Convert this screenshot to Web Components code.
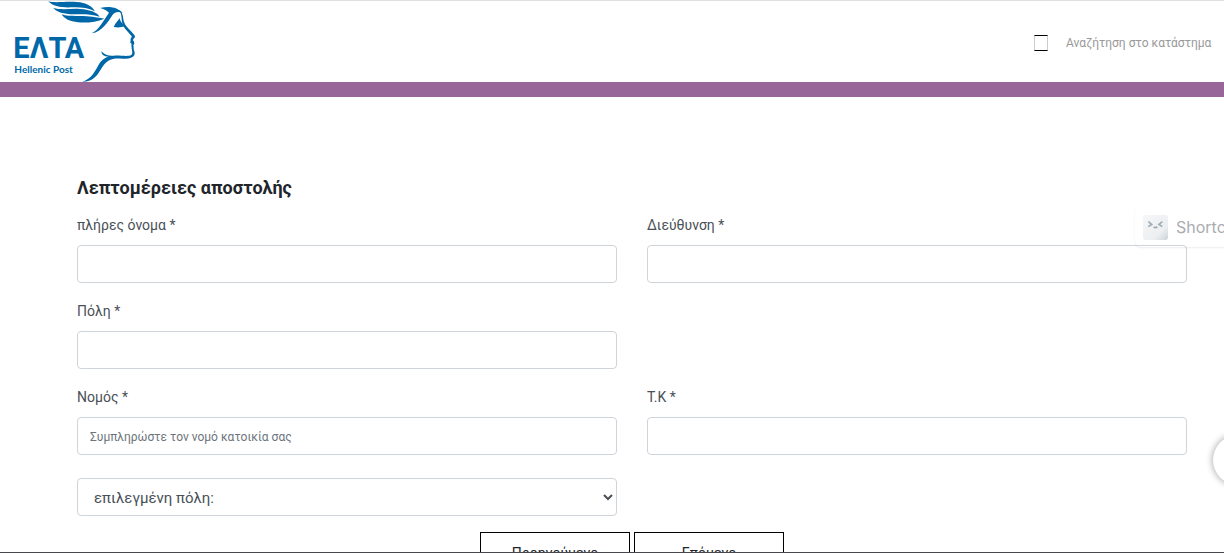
<!DOCTYPE html>
<html lang="el">
<head>
<meta charset="utf-8">
<title>ΕΛΤΑ</title>
<style>
    body {
        margin: 0;
        background: #fff;
        color: #212529;
        font-family: Roboto, "Noto Sans", sans-serif;
    }
</style>
</head>
<body>
<checkout-page></checkout-page>

<script>
class EltaLogo extends HTMLElement {
    constructor() {
        super();
        this.attachShadow({mode: "open"}).innerHTML = `
        <style>
            :host { display: block; }
            svg { display: block; width: 140px; height: 81px; }
            text { font-family: Roboto, sans-serif; font-weight: 700; }
            .small { font-family: Lato, sans-serif; }
        </style>
        <svg viewBox="0 3 420 243" fill="#0068a8" role="img" aria-label="ΕΛΤΑ Hellenic Post">
            <path d="M145 4C167 10 199 3 230 6C258 8 277 18 285 34C262 23 241 21 215 22C186 23 158 20 145 4Z"/>
            <path d="M160 24C184 31 213 25 240 27C272 29 292 38 299 50C270 41 246 43 221 43C191 42 170 37 160 24Z"/>
            <path d="M185 43C207 51 238 46 261 49C284 51 300 54 313 56C290 65 261 70 234 67C209 64 193 57 185 43Z"/>
            <path d="M300 24C330 17 354 23 368 39C354 34 346 35 338 44C324 65 307 95 275 100C297 89 307 67 327 38C319 30 311 27 300 24Z"/>
            <path d="M341 81C347 67 354 64 358 54C360 62 366 69 373 79C364 83 352 83 341 81Z"/>
            <path d="M356 29C365 34 369 43 370 57C372 73 382 82 393 94L403 105C407 110 405 113 400 117L399 121C404 126 404 132 400 136C402 141 400 145 402 151C405 158 406 165 399 170C386 179 363 175 342 176C318 180 308 199 297 217C285 236 270 246 247 245C270 238 282 219 291 203C301 184 309 174 326 170C312 170 305 165 304 154C314 165 326 168 341 167C360 165 383 171 394 165C399 160 396 155 396 149C394 145 396 141 394 137L395 132L391 128L392 118C390 114 397 113 395 109L384 96C373 85 366 75 365 59C365 47 363 37 356 29Z"/>
            <text x="40" y="174" font-size="87">ΕΛΤΑ</text>
            <text class="small" x="43" y="218" font-size="30">Hellenic Post</text>
        </svg>`;
    }
}
customElements.define("elta-logo", EltaLogo);

class StoreSearch extends HTMLElement {
    constructor() {
        super();
        this.attachShadow({mode: "open"}).innerHTML = `
        <style>
            :host { display: flex; align-items: center; gap: 18px; padding-top: 2px; }
            button {
                width: 14px;
                height: 16px;
                padding: 0;
                border: solid;
                border-width: 1px;
                border-color: #000 #ccc;
                background: #fff;
            }
            input {
                width: 152px;
                height: 24px;
                padding: 0;
                border: 0;
                outline: 0;
                appearance: none;
                font: 12px Roboto, "Noto Sans", sans-serif;
            }
            input::placeholder { color: #999; opacity: 1; }
        </style>
        <button type="button" aria-label="Αναζήτηση"></button>
        <input type="text" aria-label="Αναζήτηση στο κατάστημα" placeholder="Αναζήτηση στο κατάστημα">`;
    }
}
customElements.define("store-search", StoreSearch);

class SiteHeader extends HTMLElement {
    constructor() {
        super();
        this.attachShadow({mode: "open"}).innerHTML = `
        <style>
            :host { display: block; }
            header {
                display: flex;
                align-items: center;
                justify-content: space-between;
                padding-right: 6px;
                border-top: 1px solid #dfdfdf;
                border-bottom: 15px solid #996699;
            }
        </style>
        <header>
            <elta-logo></elta-logo>
            <store-search></store-search>
        </header>`;
    }
}
customElements.define("site-header", SiteHeader);

class FormField extends HTMLElement {
    connectedCallback() {
        const label = this.getAttribute("label");
        const placeholder = this.getAttribute("placeholder") || "";
        this.attachShadow({mode: "open"}).innerHTML = `
        <style>
            :host { display: block; }
            label {
                display: block;
                margin-bottom: 8px;
                color: #495057;
                font-size: 14px;
                line-height: 24px;
            }
            input {
                display: block;
                box-sizing: border-box;
                width: 100%;
                height: 38px;
                padding: 8px 12px 6px;
                border: 1px solid #ced4da;
                border-radius: 4px;
                background: transparent;
                color: #495057;
                font: 12px Roboto, "Noto Sans", sans-serif;
            }
            input::placeholder { color: #6c757d; opacity: 1; }
        </style>
        <label for="field">${label}</label>
        <input id="field" type="text" placeholder="${placeholder}">`;
    }
}
customElements.define("form-field", FormField);

class CitySelect extends HTMLElement {
    constructor() {
        super();
        this.attachShadow({mode: "open"}).innerHTML = `
        <style>
            :host { display: block; }
            select {
                display: block;
                box-sizing: border-box;
                width: 100%;
                height: 38px;
                padding: 8px 12px 6px;
                border: 1px solid #ced4da;
                border-radius: 4px;
                background: #fff;
                color: #495057;
                font: 15px Roboto, "Noto Sans", sans-serif;
            }
        </style>
        <select aria-label="επιλεγμένη πόλη"><option>επιλεγμένη πόλη:</option></select>`;
    }
}
customElements.define("city-select", CitySelect);

class StepButton extends HTMLElement {
    constructor() {
        super();
        this.attachShadow({mode: "open"}).innerHTML = `
        <style>
            :host { display: block; }
            button {
                width: 150px;
                height: 42px;
                padding: 0;
                border: 1px solid #000;
                background: #fff;
                color: #212529;
                font: 14px Roboto, "Noto Sans", sans-serif;
            }
        </style>
        <button type="button"><slot></slot></button>`;
    }
}
customElements.define("step-button", StepButton);

class ShippingForm extends HTMLElement {
    constructor() {
        super();
        this.attachShadow({mode: "open"}).innerHTML = `
        <style>
            :host { display: block; padding: 80px 0 0 40px; }
            form {
                box-sizing: border-box;
                max-width: 1140px;
                margin: 0 auto;
                padding: 0 15px;
            }
            h2 {
                margin: 0 0 14px;
                font-size: 18px;
                font-weight: 700;
                line-height: 22px;
            }
            .fields {
                display: grid;
                grid-template-columns: 1fr 1fr;
                gap: 16px 30px;
            }
            .first { grid-column: 1; }
            city-select { margin-top: 7px; }
            .buttons {
                display: flex;
                justify-content: center;
                gap: 4px;
                margin-top: 16px;
            }
        </style>
        <form>
            <h2>Λεπτομέρειες αποστολής</h2>
            <div class="fields">
                <form-field label="πλήρες όνομα *"></form-field>
                <form-field label="Διεύθυνση *"></form-field>
                <form-field class="first" label="Πόλη *"></form-field>
                <form-field class="first" label="Νομός *" placeholder="Συμπληρώστε τον νομό κατοικία σας"></form-field>
                <form-field label="Τ.Κ *"></form-field>
                <city-select class="first"></city-select>
            </div>
            <div class="buttons">
                <step-button>Προηγούμενο</step-button>
                <step-button>Επόμενο</step-button>
            </div>
        </form>`;
    }
}
customElements.define("shipping-form", ShippingForm);

class ShortcutBadge extends HTMLElement {
    constructor() {
        super();
        this.attachShadow({mode: "open"}).innerHTML = `
        <style>
            :host {
                display: flex;
                align-items: center;
                gap: 8px;
                box-sizing: border-box;
                width: 120px;
                height: 40px;
                padding-left: 8px;
                border-radius: 6px;
                box-shadow: 0 1px 2px rgba(0, 0, 0, 0.08);
                color: #aaacb0;
                font: 16px Inter, sans-serif;
            }
            svg { width: 25px; height: 25px; }
        </style>
        <svg viewBox="0 0 75 75" fill="none">
            <defs>
                <linearGradient id="tile" x1="0" y1="0" x2="1" y2="1">
                    <stop offset="0" stop-color="#f6f7f8"/>
                    <stop offset="0.7" stop-color="#eceef0"/>
                    <stop offset="1" stop-color="#ccd4da"/>
                </linearGradient>
            </defs>
            <rect width="75" height="75" rx="8" fill="url(#tile)"/>
            <path d="M16 20l10 8l-10 7M58 20l-10 8l10 7M32 35q5 6 11 0" stroke="#9eabb5" stroke-width="5"/>
        </svg>
        <span>Shortcuts</span>`;
    }
}
customElements.define("shortcut-badge", ShortcutBadge);

class CheckoutPage extends HTMLElement {
    constructor() {
        super();
        this.attachShadow({mode: "open"}).innerHTML = `
        <style>
            :host {
                display: block;
                position: relative;
                box-sizing: border-box;
                height: 100vh;
                overflow: hidden;
                border-bottom: 1px solid #48484c;
            }
            shortcut-badge {
                position: absolute;
                top: 207px;
                right: -31px;
            }
            .bubble {
                position: absolute;
                top: 435px;
                right: -39px;
                width: 50px;
                height: 50px;
                border-radius: 50%;
                background: #fff;
                box-shadow: 0 0 6px 1px rgba(0, 0, 0, 0.3);
            }
        </style>
        <site-header></site-header>
        <shipping-form></shipping-form>
        <shortcut-badge></shortcut-badge>
        <div class="bubble"></div>`;
    }
}
customElements.define("checkout-page", CheckoutPage);
</script>
</body>
</html>
